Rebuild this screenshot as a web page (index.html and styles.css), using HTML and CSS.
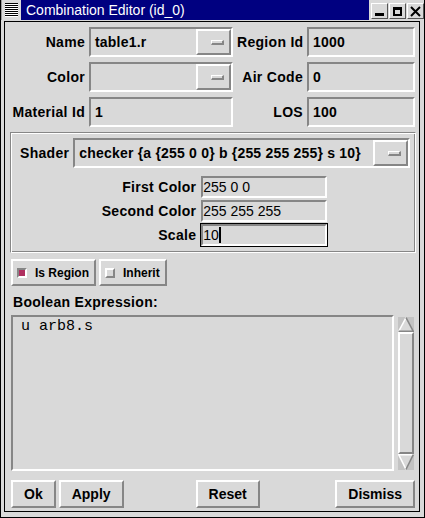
FILE: index.html
```html
<!DOCTYPE html>
<html>
<head>
<meta charset="utf-8">
<link rel="stylesheet" href="styles.css">
</head>
<body>
<div class="window">
  <div class="titlebar">
    <div class="wm-icon"><div class="wm-lines"></div></div>
    <div class="wm-title">Combination Editor (id_0)</div>
    <div class="wm-buttons">
      <div class="wm-btn"><svg width="15" height="14" viewBox="0 0 15 14"><rect x="3" y="9" width="9" height="3" fill="#000"/></svg></div>
      <div class="wm-btn"><svg width="15" height="14" viewBox="0 0 15 14"><rect x="4" y="4" width="7" height="7" fill="none" stroke="#000" stroke-width="2"/><rect x="3" y="3" width="9" height="3" fill="#000"/></svg></div>
      <div class="wm-btn"><svg width="15" height="14" viewBox="0 0 15 14"><path d="M3 3 L12 12 M12 3 L3 12" stroke="#000" stroke-width="2" fill="none"/></svg></div>
    </div>
  </div>
  <div class="client">
    <div class="fields">
      <span class="lbl">Name</span>
      <div class="combo"><span class="ctext">table1.r</span><span class="mbtn"><span class="mind"></span></span></div>
      <span class="lbl">Region Id</span>
      <div class="entry">1000</div>

      <span class="lbl">Color</span>
      <div class="combo"><span class="ctext"></span><span class="mbtn"><span class="mind"></span></span></div>
      <span class="lbl">Air Code</span>
      <div class="entry">0</div>

      <span class="lbl">Material Id</span>
      <div class="entry">1</div>
      <span class="lbl">LOS</span>
      <div class="entry">100</div>
    </div>

    <div class="shader-frame">
      <div class="shader-row">
        <span class="lbl">Shader</span>
        <div class="combo grow"><span class="ctext">checker {a {255 0 0} b {255 255 255} s 10}</span><span class="mbtn"><span class="mind"></span></span></div>
      </div>
      <div class="params">
        <span class="plbl">First Color</span>
        <div class="pentry">255 0 0</div>
        <span class="plbl">Second Color</span>
        <div class="pentry">255 255 255</div>
        <span class="plbl">Scale</span>
        <div class="pentry focus">10<span class="cursor"></span></div>
      </div>
    </div>

    <div class="checks">
      <div class="check"><span class="cind on"></span>Is Region</div>
      <div class="check"><span class="cind"></span>Inherit</div>
    </div>

    <div class="expr-label">Boolean Expression:</div>
    <div class="expr">
      <div class="textarea">u arb8.s</div>
      <div class="scrollbar">
        <svg class="arrow" width="16" height="15" viewBox="0 0 16 15">
          <rect width="16" height="15" fill="#c3c3c3"/>
          <polygon points="8,0.5 15.5,14.5 0.5,14.5" fill="#d9d9d9"/>
          <path d="M0.7 14.3 L8 0.7" stroke="#fff" stroke-width="1.5" fill="none"/>
          <path d="M8 0.7 L15.3 14.3 L0.7 14.3" stroke="#868686" stroke-width="1.5" fill="none"/>
        </svg>
        <div class="slider"></div>
        <svg class="arrow" width="16" height="16" viewBox="0 0 16 16">
          <rect width="16" height="16" fill="#c3c3c3"/>
          <polygon points="0.5,0.5 15.5,0.5 8,15.5" fill="#d9d9d9"/>
          <path d="M15.3 0.7 L0.7 0.7 L8 15.3" stroke="#fff" stroke-width="1.5" fill="none"/>
          <path d="M8 15.3 L15.3 0.7" stroke="#868686" stroke-width="1.5" fill="none"/>
        </svg>
      </div>
    </div>

    <div class="actions">
      <button class="btn">Ok</button>
      <button class="btn apply">Apply</button>
      <button class="btn reset">Reset</button>
      <button class="btn dismiss">Dismiss</button>
    </div>
  </div>
</div>
</body>
</html>
```

FILE: styles.css
```css
* { box-sizing: border-box; }
html, body { margin: 0; padding: 0; background: #d9d9d9; }
body { font-family: "Liberation Sans", Arial, sans-serif; color: #000; }

.window {
  width: 425px;
  height: 518px;
  border: 1px solid #000;
  border-top: 0;
  background: #d9d9d9;
  display: flex;
  flex-direction: column;
}

.titlebar { height: 20px; margin-bottom: 1px; display: flex; }
.wm-icon { width: 20px; height: 20px; padding: 3px 3px 3px 3px; background: #d9d9d9; border-left: 1px solid #9a9a9a; }
.wm-lines { width: 13px; height: 14px; background: repeating-linear-gradient(#000 0 1px, #fff 1px 2px); }
.wm-title {
  flex: 1;
  background: #000080;
  color: #fff;
  font-size: 14px;
  line-height: 20px;
  padding-left: 5px;
  white-space: nowrap;
}
.wm-buttons { display: flex; gap: 1px; padding: 3px 0 0 2px; width: 55px; }
.wm-btn {
  width: 17px;
  height: 16px;
  border: 1px solid;
  border-color: #fff #555 #555 #fff;
  background: #d9d9d9;
  display: flex;
}

.client {
  flex: 1;
  margin: 0 4px 5px 3px;
  border: 1px solid #000;
  display: flex;
  flex-direction: column;
  padding: 5px 0 3px 0;
  min-height: 0;
}

.fields {
  display: grid;
  grid-template-columns: 76px 144px 66px 108px;
  grid-auto-rows: 30px;
  column-gap: 4px;
  row-gap: 5px;
  margin-left: 4px;
}

.lbl {
  font-weight: bold;
  font-size: 14px;
  line-height: 16px;
  letter-spacing: 0.3px;
  text-align: right;
  align-self: center;
  white-space: nowrap;
}

.entry, .combo {
  border: 2px solid;
  border-color: #868686 #fff #fff #868686;
  display: flex;
  align-items: center;
  font-weight: bold;
  font-size: 14px;
  line-height: 16px;
  letter-spacing: 0.2px;
  white-space: nowrap;
}
.entry { padding-left: 4px; }
.combo .ctext { flex: 1; padding-left: 4px; overflow: hidden; }
.mbtn {
  width: 35px;
  height: 100%;
  border: 2px solid;
  border-color: #fff #868686 #868686 #fff;
  display: flex;
  justify-content: flex-end;
  align-items: center;
  padding-right: 5px;
}
.mind {
  width: 13px;
  height: 5px;
  border: 1px solid;
  border-color: #fff #868686 #868686 #fff;
  border-right-width: 2px;
  border-bottom-width: 2px;
}

.shader-frame {
  margin: 5px 3px 0 5px;
  border: 1px solid;
  border-color: #868686 #fff #fff #868686;
  box-shadow: inset 1px 1px #fff, inset -1px -1px #868686;
  padding: 5px 5px 5px 9px;
}
.shader-row { display: flex; gap: 4px; height: 30px; }
.combo.grow { flex: 1; }

.params {
  margin-top: 7px;
  display: grid;
  grid-template-columns: auto 128px;
  grid-auto-rows: 24px;
  column-gap: 4px;
  justify-content: center;
}
.plbl {
  font-weight: bold;
  font-size: 14px;
  line-height: 16px;
  letter-spacing: 0.3px;
  text-align: right;
  align-self: center;
  white-space: nowrap;
}
.pentry {
  margin: 1px;
  border: 2px solid;
  border-color: #868686 #fff #fff #868686;
  font-size: 14px;
  line-height: 18px;
  white-space: pre;
}
.pentry.focus { outline: 1px solid #000; }
.cursor {
  display: inline-block;
  width: 2px;
  height: 16px;
  background: #000;
  vertical-align: -3px;
}

.checks { display: flex; gap: 3px; margin: 6px 0 0 6px; height: 27px; }
.check {
  display: flex;
  align-items: center;
  gap: 8px;
  border: 2px solid;
  border-color: #fff #868686 #868686 #fff;
  padding: 0 5px 0 4px;
  font-weight: bold;
  font-size: 12px;
}
.cind {
  width: 10px;
  height: 10px;
  border: 2px solid;
  border-color: #fff #868686 #868686 #fff;
  background: #d9d9d9;
}
.cind.on {
  border-color: #868686 #fff #fff #868686;
  background: #b03060;
}

.expr-label {
  margin: 8px 0 0 8px;
  font-weight: bold;
  font-size: 14px;
  line-height: 16px;
  letter-spacing: 0.3px;
}

.expr { flex: 1; display: flex; margin-top: 5px; padding-left: 6px; min-height: 0; }
.textarea {
  flex: 1;
  border: 2px solid;
  border-color: #868686 #fff #fff #868686;
  font-family: "Liberation Mono", "Courier New", monospace;
  font-size: 15px;
  line-height: 17px;
  padding: 1px 8px;
  white-space: pre;
}
.scrollbar {
  width: 16px;
  margin: 2px 5px 1px 4px;
  display: flex;
  flex-direction: column;
  background: #c3c3c3;
}
.arrow { display: block; flex: none; }
.slider {
  flex: 1;
  border: 2px solid;
  border-color: #fff #868686 #868686 #fff;
  background: #d9d9d9;
}

.actions { display: flex; height: 28px; margin-top: 9px; padding: 0 4px 0 6px; }
.btn {
  font-family: "Liberation Sans", Arial, sans-serif;
  font-weight: bold;
  font-size: 14px;
  color: #000;
  background: #d9d9d9;
  border: 2px solid;
  border-color: #fff #868686 #868686 #fff;
  padding: 0 11px;
  height: 28px;
  margin: 0;
}
.btn.apply { margin-left: 3px; }
.btn.reset { margin-left: 72px; }
.btn.dismiss { margin-left: auto; }
```
